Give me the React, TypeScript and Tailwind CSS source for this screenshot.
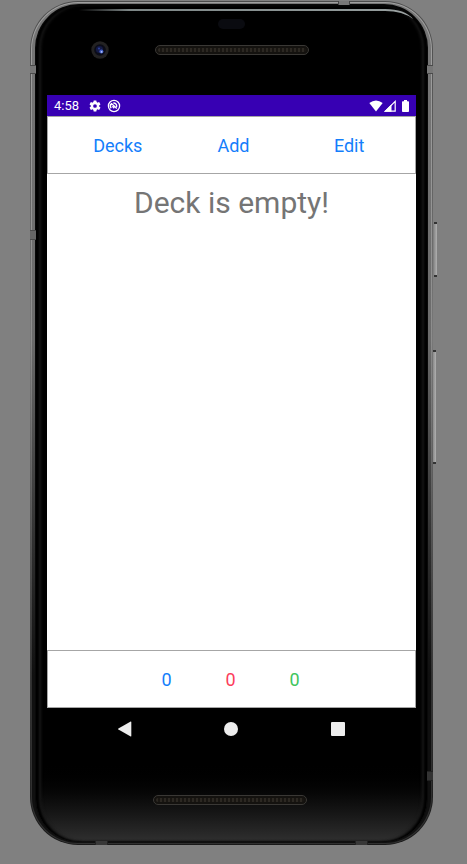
import React from "react";

function Speaker() {
  return (
    <div className="h-[10px] w-[154px] rounded-full border border-[#3a3835] bg-[#14120f] p-[2px]">
      <div className="h-full rounded-full bg-[repeating-linear-gradient(90deg,#2c2822_0px,#2c2822_2px,#191612_2px,#191612_4px)]" />
    </div>
  );
}

function Camera() {
  return (
    <svg width="18" height="18" viewBox="0 0 18 18" aria-hidden="true">
      <circle cx="9" cy="9" r="8.7" fill="#232222" />
      <circle cx="9" cy="9" r="5.8" fill="#0b0c18" />
      <circle cx="8.5" cy="8.5" r="3.6" fill="#141a45" />
      <circle cx="8" cy="7.6" r="1.1" fill="#2c3f96" />
      <circle cx="10.4" cy="10.4" r="2" fill="#4460c8" />
      <circle cx="10.6" cy="10.8" r="0.9" fill="#b9c9ff" />
    </svg>
  );
}

function StatusBar() {
  return (
    <div className="flex h-[21px] items-center justify-between bg-[#3700b3] pl-[7px] pr-[6px] text-white">
      <div className="flex items-center">
        <span className="text-[13px] leading-[20px]">4:58</span>
        <svg className="ml-[9px]" width="14" height="14" viewBox="0 0 24 24" fill="currentColor" aria-label="Settings">
          <path d="M19.14 12.94c.04-.3.06-.61.06-.94s-.02-.64-.07-.94l2.03-1.58a.49.49 0 0 0 .12-.61l-1.92-3.32a.49.49 0 0 0-.59-.22l-2.39.96a7 7 0 0 0-1.62-.94l-.36-2.54A.48.48 0 0 0 13.92 2.4h-3.84a.48.48 0 0 0-.47.41l-.36 2.54c-.59.24-1.13.57-1.62.94l-2.39-.96a.48.48 0 0 0-.59.22L2.74 8.87a.48.48 0 0 0 .12.61l2.03 1.58c-.05.3-.09.63-.09.94s.02.64.07.94l-2.03 1.58a.49.49 0 0 0-.12.61l1.92 3.32c.12.22.37.29.59.22l2.39-.96c.5.38 1.03.7 1.62.94l.36 2.54c.05.24.24.41.48.41h3.84c.24 0 .44-.17.47-.41l.36-2.54c.59-.24 1.13-.56 1.62-.94l2.39.96c.22.08.47 0 .59-.22l1.92-3.32a.48.48 0 0 0-.12-.61zM12 15.2A3.200 3.200 0 1 1 12 8.800a3.200 3.200 0 0 1 0 6.400z" />
        </svg>
        <svg className="ml-[5px]" width="14" height="14" viewBox="0 0 14 14" fill="none" stroke="currentColor" aria-label="Debugging">
          <circle cx="7" cy="7" r="5.6" strokeWidth="1.3" />
          <path d="M4.2 9.2A3.3 3.3 0 0 1 4.6 4.6l5.200 5M5.400 7.200l1.900 2M6.300 4.100a3 3 0 0 1 3.300 3.700" strokeWidth="1.4" />
        </svg>
      </div>
      <div className="flex items-center">
        <svg width="14" height="12" viewBox="0 0 14 12" fill="currentColor" aria-label="Wi-Fi">
          <path d="M0.3 3.1Q7-2.2 13.7 3.1L7 11.5Z" />
        </svg>
        <svg className="ml-px" width="12" height="12" viewBox="0 0 12 12" aria-label="Signal">
          <path d="M1.4 11.2 11.2 1.4v9.8Z" fill="none" stroke="currentColor" strokeWidth="1.2" />
          <path d="M0 11.8 7.5 4.3v7.5Z" fill="currentColor" />
        </svg>
        <svg className="ml-[5px]" width="9" height="12" viewBox="0 0 9 12" fill="currentColor" aria-label="Battery">
          <path d="M3 0h3v1.2h1.2q.8 0 .8.8v9q0 .9-.8.9H1.8Q1 11.900 1 11V2q0-.8.8-.8H3Z" />
        </svg>
      </div>
    </div>
  );
}

function AppScreen() {
  const tab = "text-[18px] leading-6 text-[#147efb]";
  return (
    <div className="flex flex-col bg-white">
      <StatusBar />
      <nav className="grid h-[58px] grid-cols-3 items-center border border-[#a6a6a6] pl-3 pr-2 pt-[2px]">
        <button className={tab}>Decks</button>
        <button className={tab}>Add</button>
        <button className={tab}>Edit</button>
      </nav>
      <main className="h-[476px] pt-[9px] text-center">
        <h1 className="text-[30px] leading-[40px] text-[#757575]">Deck is empty!</h1>
      </main>
      <footer className="flex h-[58px] items-center justify-center border border-[#a6a6a6] pr-[2px] pt-[2px] text-center text-[18px] leading-6">
        <span className="w-16 text-[#147efb]">0</span>
        <span className="w-16 text-[#fc3d5b]">0</span>
        <span className="w-16 text-[#41c55d]">0</span>
      </footer>
    </div>
  );
}

function SystemNav() {
  return (
    <div className="mx-auto grid h-[42px] w-[320px] grid-cols-3 place-items-center text-[#ededed]">
      <button aria-label="Back">
        <svg width="14" height="16" viewBox="0 0 14 16" fill="currentColor">
          <path d="M.4 7.500 12.700.5q.6-.3.600.4v14.200q0 .7-.6.400L.4 8.500q-.6-.5 0-1Z" />
        </svg>
      </button>
      <button aria-label="Home" className="size-[14px] rounded-full bg-[#ededed]" />
      <button aria-label="Recent apps" className="size-[14px] rounded-[1px] bg-[#ededed]" />
    </div>
  );
}

function SideButton({ className }: { className: string }) {
  return (
    <div className={"absolute w-[3px] border-y-2 border-[#333] bg-linear-to-r from-[#8a8a8a] to-[#b0b0b0] " + className} />
  );
}

export default function App() {
  return (
    <div className="min-h-screen bg-[#808080] pl-[30px] pr-[34px] pt-px font-['Roboto','Liberation_Sans',sans-serif]">
      <div className="relative mx-auto max-w-[403px]">
        <SideButton className="-right-[4px] top-[221px] h-[55px]" />
        <SideButton className="-right-[3px] top-[349px] h-[114px]" />
        <div className="rounded-[48px] bg-linear-to-b from-[#4c4c4c] via-[#787878] via-40% to-[#191919] p-px">
          <div className="rounded-[47px] bg-linear-to-b from-[#a0a0a0] via-[#8c8c8c] via-40% to-[#303030] to-80% p-px">
            <div className="rounded-[46px] bg-linear-to-b from-[#777] via-[#6b6b6b] via-40% to-[#101010] to-80% px-[3px] py-px">
              <div className="rounded-[44px] bg-[#090909] px-px pt-px">
                <div className="relative flex flex-col overflow-hidden rounded-[43px] bg-linear-to-b from-black from-90% to-[#303030] px-[11px] shadow-[inset_3px_0_2px_#000,inset_-3px_0_2px_#000,inset_5px_0_3px_#191919,inset_-5px_0_3px_#191919]">
                  <svg className="absolute right-[14px] top-[4px] h-[12px] w-[334px]" viewBox="0 0 334 12" fill="none" aria-hidden="true">
                    <linearGradient id="glass-edge" x1="0" x2="334" y1="0" y2="0" gradientUnits="userSpaceOnUse">
                      <stop offset="0" stopColor="#82898a" stopOpacity="0" />
                      <stop offset=".15" stopColor="#7d8686" />
                      <stop offset=".9" stopColor="#939b9b" />
                      <stop offset="1" stopColor="#a0a6a6" />
                    </linearGradient>
                    <path d="M0 0H306Q326 0 334 10Q324 2 306 2H0Z" fill="url(#glass-edge)" />
                  </svg>
                  <header className="flex h-[90px] flex-col items-center pt-[14px]">
                    <div className="h-[10px] w-[27px] rounded-full bg-[#0a0b10]" />
                    <div className="mt-[12px] grid w-full grid-cols-[1fr_154px_1fr] items-center">
                      <div className="pl-[44px]"><Camera /></div>
                      <Speaker />
                    </div>
                  </header>
                  <AppScreen />
                  <SystemNav />
                  <div className="mt-[45px] flex h-[47px] justify-center pr-1">
                    <Speaker />
                  </div>
                </div>
              </div>
            </div>
          </div>
        </div>
        <div className="absolute left-0 top-[64px] h-[9px] w-[6px] border-y border-[#4a4a4a] bg-[#777]" />
        <div className="absolute left-0 top-[229px] h-[10px] w-[6px] border-y border-[#4a4a4a] bg-[#666]" />
        <div className="absolute right-0 top-[64px] h-[9px] w-[6px] border-y border-[#4a4a4a] bg-[#777]" />
        <div className="absolute right-0 top-[770px] h-[10px] w-[6px] border-y border-[#222] bg-[#333]" />
        <div className="absolute right-[83px] top-0 h-[4px] w-[12px] border-x border-[#444] bg-[#777]" />
        <div className="absolute bottom-0 left-[65px] h-[4px] w-[13px] border-x border-[#222] bg-[#383838]" />
        <div className="absolute bottom-0 right-[65px] h-[4px] w-[13px] border-x border-[#222] bg-[#383838]" />
      </div>
    </div>
  );
}
